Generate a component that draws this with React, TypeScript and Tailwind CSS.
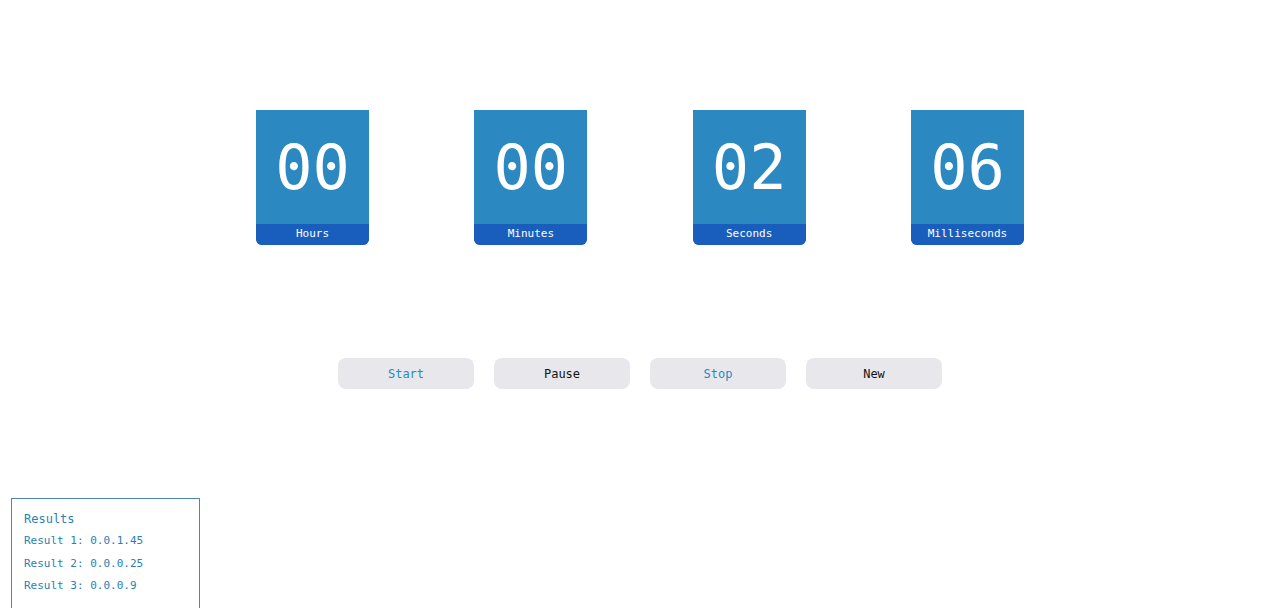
import React from "react";

const units = [
  { value: "00", label: "Hours" },
  { value: "00", label: "Minutes" },
  { value: "02", label: "Seconds" },
  { value: "06", label: "Milliseconds" },
];

const buttons = [
  { label: "Start", tone: "text-[#2a88c0]" },
  { label: "Pause", tone: "text-[#111]" },
  { label: "Stop", tone: "text-[#2a88c0]" },
  { label: "New", tone: "text-[#111]" },
];

const results = ["0.0.1.45", "0.0.0.25", "0.0.0.9"];

export default function App() {
  return (
    <div className="relative h-[608px] w-full overflow-hidden bg-white font-['DejaVu_Sans_Mono',monospace]">
      {/* Timer cards */}
      <div className="flex justify-center gap-[105.34px] pt-[110px]">
        {units.map((u) => (
          <div key={u.label} className="flex h-[135px] w-[113px] flex-col overflow-hidden rounded-b-md bg-[#2b88c0]">
            <div className="flex flex-1 items-center justify-center pt-[2px] text-[62px] leading-none text-white">
              {u.value}
            </div>
            <div className="flex h-[21px] items-center justify-center bg-[#1a5ebd] text-[11px] text-white">
              {u.label}
            </div>
          </div>
        ))}
      </div>

      {/* Controls */}
      <div className="mt-[113px] flex justify-center gap-5">
        {buttons.map((b) => (
          <button
            key={b.label}
            className={`h-[31px] w-[136px] rounded-lg bg-[#e8e8ec] pt-[1px] text-[12px] ${b.tone}`}
          >
            {b.label}
          </button>
        ))}
      </div>

      {/* Results */}
      <div className="absolute left-[11px] top-[498px] h-[130px] w-[189px] border border-[#4f86b8] px-3 pt-[11px] text-[#2a80b6]">
        <div className="text-[12px]">Results</div>
        <div className="mt-[5px] flex flex-col gap-[6px] text-[11px]">
          {results.map((r, i) => (
            <div key={r}>
              Result {i + 1}: {r}
            </div>
          ))}
        </div>
      </div>
    </div>
  );
}
